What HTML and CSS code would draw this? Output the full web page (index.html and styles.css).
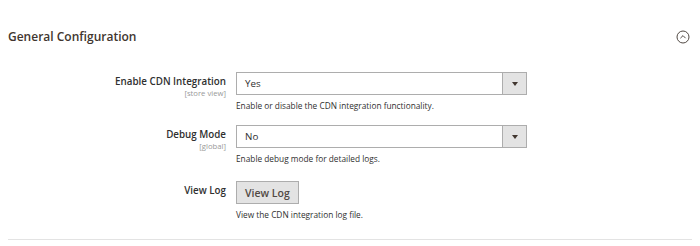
FILE: index.html
```html
<!DOCTYPE html>
<html>
<head>
<meta charset="utf-8">
<link rel="stylesheet" href="styles.css">
</head>
<body>
<section class="section">
  <div class="head">
    <h2 class="title">General Configuration</h2>
    <svg class="toggle" width="14" height="14" viewBox="0 0 14 14"><circle cx="7" cy="7" r="6" fill="none" stroke="#514943" stroke-width="1"/><path d="M4.4 8.2 L7 5.6 L9.6 8.2" fill="none" stroke="#514943" stroke-width="1"/></svg>
  </div>
  <div class="rows">
    <div class="row">
      <div class="label"><span class="name">Enable CDN Integration</span><span class="scope">[store view]</span></div>
      <div class="control">
        <div class="select"><span class="value">Yes</span><span class="arrow"><span class="tri"></span></span></div>
        <p class="note">Enable or disable the CDN integration functionality.</p>
      </div>
    </div>
    <div class="row">
      <div class="label"><span class="name">Debug Mode</span><span class="scope">[global]</span></div>
      <div class="control">
        <div class="select"><span class="value">No</span><span class="arrow"><span class="tri"></span></span></div>
        <p class="note">Enable debug mode for detailed logs.</p>
      </div>
    </div>
    <div class="row row-action">
      <div class="label"><span class="name">View Log</span></div>
      <div class="control">
        <button class="btn">View Log</button>
        <p class="note">View the CDN integration log file.</p>
      </div>
    </div>
  </div>
</section>
</body>
</html>
```
FILE: styles.css
```css
html, body { margin: 0; padding: 0; background: #fff; }
body { font-family: "Open Sans", "DejaVu Sans", sans-serif; color: #303030; }
.section { margin: 0 8px; padding-top: 28px; border-bottom: 1px solid #e3e3e3; padding-bottom: 19px; }
.head { display: flex; justify-content: space-between; align-items: center; padding-right: 2px; }
.title { margin: 0; font-size: 12px; font-weight: 600; color: #41362f; line-height: 17px; }
.toggle { display: block; margin-top: 1px; }
.rows { display: flex; flex-direction: column; gap: 14px; margin-top: 27px; }
.row { display: flex; gap: 10px; }
.row-action { padding-top: 3px; }
.label { width: 218px; display: flex; flex-direction: column; align-items: flex-end; padding-top: 4px; }
.name { font-size: 9.8px; font-weight: 600; line-height: 12px; color: #303030; }
.scope { font-size: 7.7px; line-height: 10px; color: #999; }
.control { width: 291px; }
.select { height: 23px; box-sizing: border-box; border: 1px solid #adadad; display: flex; background: #fff; }
.value { flex: 1; font-size: 9.8px; line-height: 21px; padding-left: 8px; color: #303030; }
.arrow { width: 23px; background: #e3e3e3; border-left: 1px solid #adadad; display: flex; align-items: center; justify-content: center; }
.tri { width: 0; height: 0; border-left: 3px solid transparent; border-right: 3px solid transparent; border-top: 4px solid #41362f; }
.note { margin: 5px 0 0; font-size: 8.3px; line-height: 11px; color: #303030; }
.btn { display: block; height: 23px; padding: 0 8px; font-family: inherit; font-size: 10.5px; font-weight: 600; color: #514943; background: #e3e3e3; border: 1px solid #adadad; border-radius: 0; }
```
